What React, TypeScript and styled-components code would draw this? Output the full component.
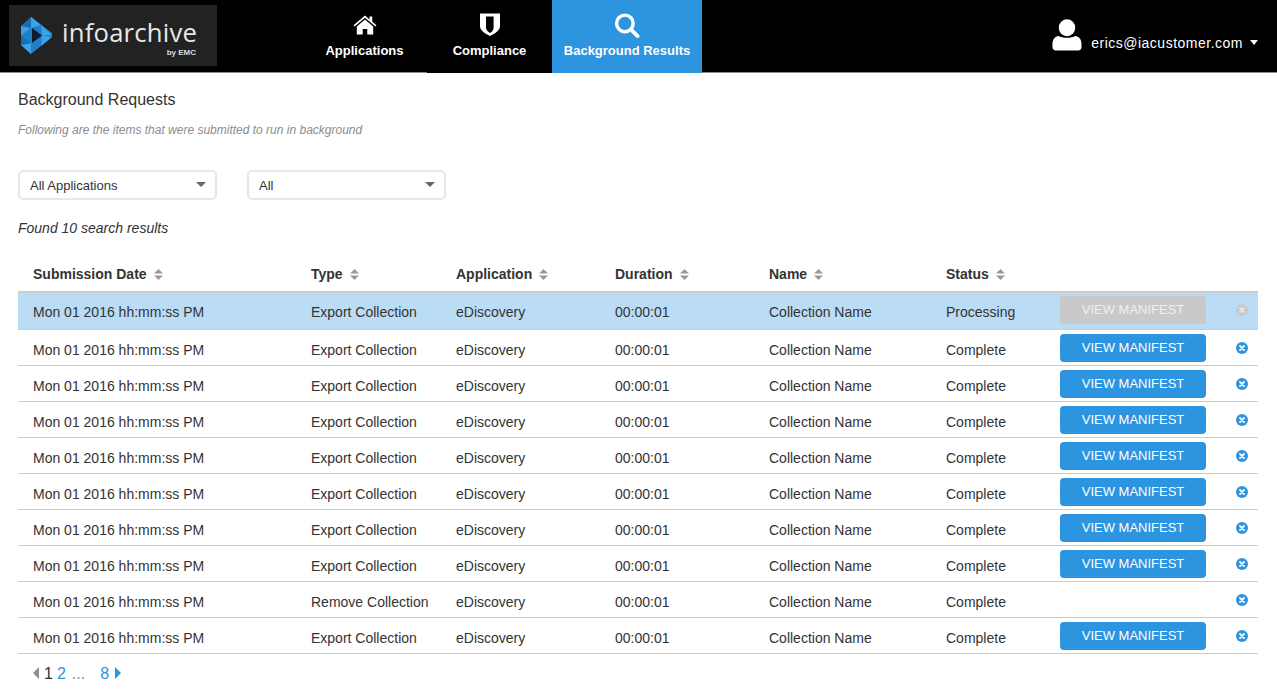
import React from "react";
import styled, { createGlobalStyle } from "styled-components";

const Global = createGlobalStyle`
  html, body { margin: 0; padding: 0; background: #fff; }
  body { font-family: "Liberation Sans", Arial, sans-serif; color: #333; overflow: hidden; height: 689px; }
  * { box-sizing: border-box; }
`;

const Header = styled.header`
  height: 73px;
  background: #000;
  border-bottom: 1px solid #8a8a8a;
  display: flex;
  align-items: flex-start;
  padding: 5px 0 0 9px;
`;
const LogoBox = styled.div`
  width: 208px;
  height: 61px;
  background: #222;
  display: flex;
  align-items: center;
  padding-left: 11px;
  position: relative;
`;
const LogoText = styled.span`
  color: #e8e8e8;
  font-family: "Open Sans", sans-serif;
  font-size: 25.7px;
  line-height: 24px;
  margin-left: 9px;
  margin-top: -6px;
  letter-spacing: 0.2px;
`;
const LogoSub = styled.span`
  position: absolute;
  right: 21px;
  bottom: 9px;
  color: #ddd;
  font-size: 8px;
  line-height: 8px;
  font-weight: bold;
`;
const Nav = styled.nav`
  display: flex;
  margin: -5px 0 0 85px;
`;
const Tab = styled.div<{ $w: number; $active?: boolean; $cover?: boolean }>`
  width: ${(p) => p.$w}px;
  height: ${(p) => (p.$active || p.$cover ? 73 : 72)}px;
  background: ${(p) => (p.$active ? "#2d94df" : "#000")};
  display: flex;
  flex-direction: column;
  align-items: center;
  color: #fff;
  font-size: 13px;
  font-weight: bold;
  position: relative;
`;
const TabIcon = styled.div<{ $pb: number }>`
  height: 43px;
  display: flex;
  align-items: flex-end;
  padding-bottom: ${(p) => p.$pb}px;
`;
const User = styled.div`
  margin-left: auto;
  margin-top: 14px;
  padding-right: 19px;
  display: flex;
  align-items: flex-end;
  color: #fff;
  font-size: 14px;
  letter-spacing: 0.5px;
`;
const UserName = styled.span`
  margin: 0 7px 0 9px;
  line-height: 16px;
`;
const Caret = styled.span`
  width: 0;
  height: 0;
  border-left: 4.5px solid transparent;
  border-right: 4.5px solid transparent;
  border-top: 5px solid #fff;
  margin-bottom: 6px;
`;
const Main = styled.main`
  padding: 0 19px 0 18px;
`;
const Title = styled.h1`
  margin: 18px 0 0;
  font-size: 16px;
  line-height: 18px;
  font-weight: normal;
  color: #333;
`;
const Sub = styled.p`
  margin: 14px 0 0;
  font-size: 12px;
  line-height: 14px;
  font-style: italic;
  color: #8c8c8c;
`;
const Filters = styled.div`
  display: flex;
  gap: 30px;
  margin-top: 33px;
`;
const Select = styled.div`
  width: 199px;
  height: 30px;
  border: 2px solid #e8e8e8;
  border-radius: 5px;
  display: flex;
  align-items: center;
  justify-content: space-between;
  padding: 0 9px 0 10px;
  font-size: 13px;
  color: #333;
`;
const SelectCaret = styled.span`
  width: 0;
  height: 0;
  border-left: 5px solid transparent;
  border-right: 5px solid transparent;
  border-top: 5px solid #666;
  margin-top: -2px;
`;
const Found = styled.p`
  margin: 20px 0 0;
  font-size: 14px;
  line-height: 16px;
  font-style: italic;
  color: #333;
`;
const cols = "293px 145px 159px 154px 177px 114px 146px 1fr";
const HeadRow = styled.div`
  display: grid;
  grid-template-columns: ${cols};
  height: 27px;
  margin-top: 30px;
  font-size: 14px;
  font-weight: bold;
  line-height: 16px;
  border-bottom: 2px solid #ccc;
  align-items: start;
`;
const HeadCell = styled.div`
  display: flex;
  align-items: center;
  gap: 7px;
  &:first-child { padding-left: 15px; }
`;
const Row = styled.div<{ $active?: boolean }>`
  display: grid;
  grid-template-columns: ${cols};
  height: ${(p) => (p.$active ? 37 : 36)}px;
  background: ${(p) => (p.$active ? "#bbdcf5" : "#fff")};
  border-bottom: 1px solid #ccc;
  font-size: 14px;
  line-height: 16px;
  color: #333;
`;
const Cell = styled.div<{ $top: number }>`
  padding-top: ${(p) => p.$top}px;
  white-space: nowrap;
  &:first-child { padding-left: 15px; }
`;
const ActionCell = styled.div<{ $top: number }>`
  padding-top: ${(p) => p.$top}px;
`;
const ManifestButton = styled.div<{ $disabled?: boolean }>`
  width: 146px;
  height: 28px;
  border-radius: 4px;
  background: ${(p) => (p.$disabled ? "#c9c9c9" : "#2d94df")};
  color: ${(p) => (p.$disabled ? "#efefef" : "#fff")};
  font-size: 13px;
  line-height: 28px;
  text-align: center;
`;
const RemoveCell = styled.div<{ $top: number }>`
  padding: ${(p) => p.$top}px 0 0 30px;
  display: flex;
  align-items: flex-start;
`;
const Pager = styled.div`
  display: flex;
  align-items: center;
  margin: 11px 0 0 15px;
  height: 18px;
  font-size: 16px;
  font-weight: normal;
  color: #333;
`;
const PageLink = styled.span<{ $left: number }>`
  color: #2d94df;
  margin-left: ${(p) => p.$left}px;
`;
const Dots = styled.span`
  color: #888;
  margin-left: 6px;
`;
const PagerArrow = styled.span<{ $dir: "left" | "right" }>`
  width: 0;
  height: 0;
  border-top: 6px solid transparent;
  border-bottom: 6px solid transparent;
  ${(p) => (p.$dir === "left" ? "border-right: 6px solid #8f8f8f; margin-right: 5px;" : "border-left: 6px solid #2d94df; margin-left: 6px;")}
  margin-top: -3px;
`;

const HomeIcon = () => (
  <svg width="24" height="20" viewBox="0 0 24 21">
    <path fill="#fff" d="M12 0.5 L16.8 4.6 V1.6 H19.6 V7 L24 10.8 L22.9 12.2 L12 3 L1.1 12.2 L0 10.8 Z" />
    <path fill="#fff" d="M12 4.8 L20.6 12 V20.4 H14.4 V14.6 H9.6 V20.4 H3.4 V12 Z" />
  </svg>
);
const ShieldIcon = () => (
  <svg width="20" height="23" viewBox="0 0 20 23">
    <path fill="#fff" fillRule="evenodd" d="M0 0.5 H20 V13 C20 17.6 15 20.6 10 23 C5 20.6 0 17.6 0 13 Z M6 3.5 V15 C6 16.8 8 18.8 10 20 C10.8 19.5 11.5 19 12.2 18.3 C13 17.2 13.6 16 13.6 14.6 V3.5 Z" />
  </svg>
);
const SearchIcon = () => (
  <svg width="26" height="25" viewBox="0 0 26 26">
    <circle cx="10.8" cy="10.8" r="8.6" fill="none" stroke="#fff" strokeWidth="3.6" />
    <path d="M17.5 17.5 L24 24" stroke="#fff" strokeWidth="4" strokeLinecap="round" />
  </svg>
);
const UserIcon = () => (
  <svg width="30" height="32" viewBox="0 0 31 33">
    <ellipse cx="15.5" cy="9" rx="8.5" ry="8.8" fill="#fff" />
    <path fill="#fff" d="M7 17.5 C10 20 21 20 24 17.5 C28 18 30.5 21 30.5 26 V29 C30.5 31.5 29 32.5 27 32.5 H4 C2 32.5 0.5 31.5 0.5 29 V26 C0.5 21 3 18 7 17.5 Z" />
  </svg>
);
const LogoMark = () => (
  <svg width="33" height="37" viewBox="0 0 33 37">
    <path fill="#1f7fca" d="M1 9 L11 0 L32 16 V20 L11 37 L1 28 Z" />
    <path fill="#3aa2ea" d="M11 0 L21 8 L11 11 Z M1 9 L11 11 L1 18.5 Z M32 18 L21 8 L22 18.5 Z M1 28 L11 26 V37 Z M22 18.5 L32 20 L21 29 Z" />
    <path fill="#1a6db0" d="M1 18.5 L11 26 L1 28 Z M11 0 L1 9 L11 11 Z" />
    <path fill="#0d1c2c" d="M12 11 L22 18.5 L12 26 Z" />
  </svg>
);
const SortIcon = () => (
  <svg width="9" height="11" viewBox="0 0 9 11">
    <path fill="#999" d="M4.5 0 L9 4.6 H0 Z M0 6.4 H9 L4.5 11 Z" />
  </svg>
);
const RemoveIcon = ({ disabled }: { disabled?: boolean }) => (
  <svg width="12" height="12" viewBox="0 0 12 12">
    <circle cx="6" cy="6" r="6" fill={disabled ? "#c9c9c9" : "#2d94df"} />
    <path d="M4 4 L8 8 M8 4 L4 8" stroke={disabled ? "#e6e6e6" : "#fff"} strokeWidth="1.8" strokeLinecap="round" />
  </svg>
);

const heads = ["Submission Date", "Type", "Application", "Duration", "Name", "Status"];
const rows = Array.from({ length: 10 }, (_, i) => ({
  type: i === 8 ? "Remove Collection" : "Export Collection",
  status: i === 0 ? "Processing" : "Complete",
  button: i !== 8,
}));

export default function App() {
  return (
    <>
      <Global />
      <Header>
        <LogoBox>
          <LogoMark />
          <LogoText>infoarchive</LogoText>
          <LogoSub>by EMC</LogoSub>
        </LogoBox>
        <Nav>
          <Tab $w={125}>
            <TabIcon $pb={8}><HomeIcon /></TabIcon>
            Applications
          </Tab>
          <Tab $w={125} $cover>
            <TabIcon $pb={7}><ShieldIcon /></TabIcon>
            Compliance
          </Tab>
          <Tab $w={150} $active>
            <TabIcon $pb={5}><SearchIcon /></TabIcon>
            Background Results
          </Tab>
        </Nav>
        <User>
          <UserIcon />
          <UserName>erics@iacustomer.com</UserName>
          <Caret />
        </User>
      </Header>
      <Main>
        <Title>Background Requests</Title>
        <Sub>Following are the items that were submitted to run in background</Sub>
        <Filters>
          <Select>All Applications<SelectCaret /></Select>
          <Select>All<SelectCaret /></Select>
        </Filters>
        <Found>Found 10 search results</Found>
        <HeadRow>
          {heads.map((h) => (
            <HeadCell key={h}>{h}<SortIcon /></HeadCell>
          ))}
        </HeadRow>
        {rows.map((r, i) => {
          const textTop = i === 0 ? 11 : 12;
          const btnTop = i === 0 ? 3 : 4;
          const iconTop = i === 0 ? 11 : 12;
          return (
            <Row key={i} $active={i === 0}>
              <Cell $top={textTop}>Mon 01 2016 hh:mm:ss PM</Cell>
              <Cell $top={textTop}>{r.type}</Cell>
              <Cell $top={textTop}>eDiscovery</Cell>
              <Cell $top={textTop}>00:00:01</Cell>
              <Cell $top={textTop}>Collection Name</Cell>
              <Cell $top={textTop}>{r.status}</Cell>
              <ActionCell $top={btnTop}>
                {r.button && <ManifestButton $disabled={i === 0}>VIEW MANIFEST</ManifestButton>}
              </ActionCell>
              <RemoveCell $top={iconTop}><RemoveIcon disabled={i === 0} /></RemoveCell>
            </Row>
          );
        })}
        <Pager>
          <PagerArrow $dir="left" />
          1
          <PageLink $left={4}>2</PageLink>
          <Dots>...</Dots>
          <PageLink $left={15}>8</PageLink>
          <PagerArrow $dir="right" />
        </Pager>
      </Main>
    </>
  );
}
